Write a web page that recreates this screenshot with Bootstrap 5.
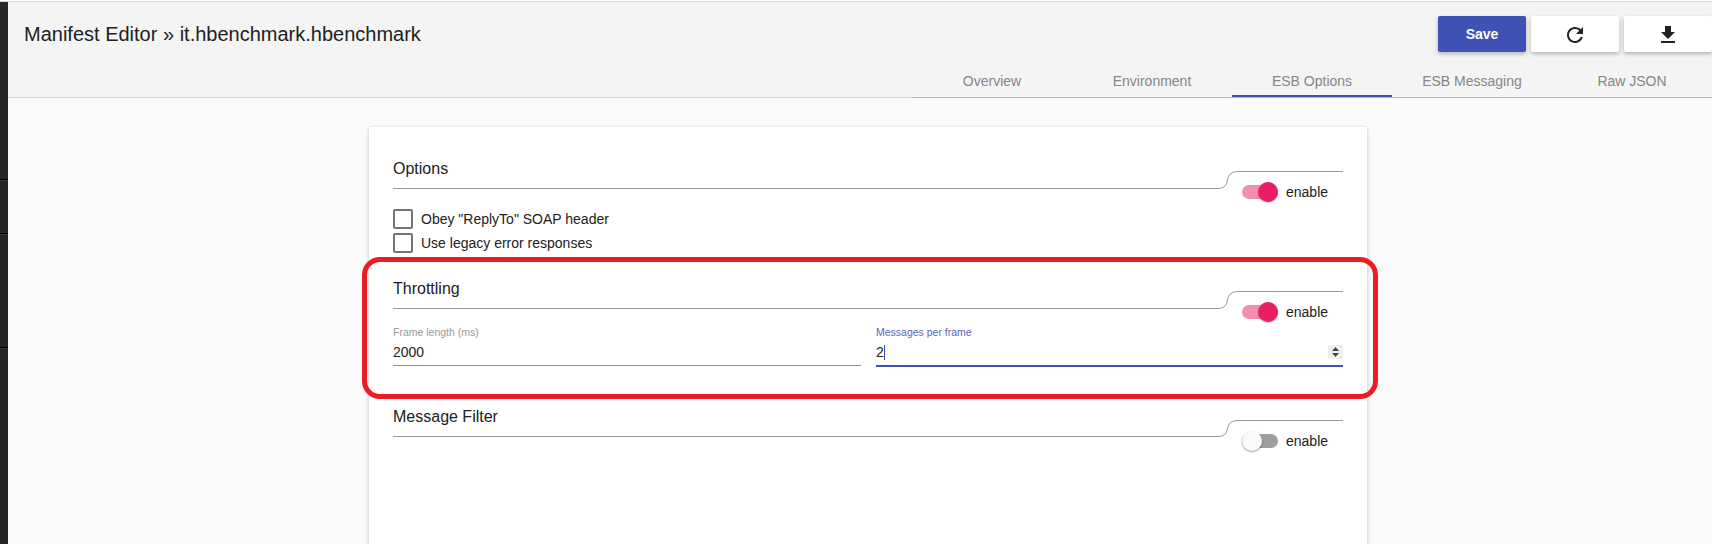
<!DOCTYPE html>
<html lang="en">
<head>
<meta charset="utf-8">
<title>Manifest Editor</title>
<link href="https://cdn.jsdelivr.net/npm/bootstrap@5.3.0/dist/css/bootstrap.min.css" rel="stylesheet">
<style>
  html, body { height: 544px; overflow: hidden; }
  body { font-family: "Liberation Sans", Arial, sans-serif; font-size: 14px; line-height: 20px; color: #212121; background: #fafafa; }
  .app { height: 544px; border-top: 1px solid #fff; }
  .app-top { border-top: 1px solid #d5d7d7; }
  .rail { width: 8px; background: #262728; padding-top: 177px; }
  .rail-line { height: 2px; border-top: 1px solid #000; border-bottom: 1px solid #3d3d31; }
  .rail-line + .rail-line { margin-top: 52px; }
  .rail-line + .rail-line.far { margin-top: 112px; }
  .topbar { height: 96px; background: #f4f4f4; border-bottom: 1px solid #d6d6d6; }
  .page-title { font-size: 20px; line-height: 24px; font-weight: 400; margin: 20px 0 0 16px; }
  .tool-row { gap: 5px; padding-top: 14px; }
  .md-btn { width: 88px; height: 36px; padding: 0; border: 0; border-radius: 2px; background: #fff; color: #212121; font-size: 14px; font-weight: 700; box-shadow: 0 2px 4px rgba(0,0,0,.27); }
  .md-btn svg { margin-top: 2px; }
  .md-btn.main, .md-btn.main:hover { background: #3f51b5; color: #fff; }
  .tab-row { width: 800px; height: 33px; margin-top: 13px; border-bottom: 1px solid #b8b8b8; }
  .tab-row .nav-link { width: 160px; height: 32px; padding: 7px 0 0; line-height: 18px; color: #868686; text-align: center; border-bottom: 2px solid transparent; }
  .tab-row .nav-link.active { border-bottom-color: #3f51b5; }
  .sheet { width: 998px; height: 430px; margin: 29px 0 0 361px; padding: 30px 24px 0; background: #fff; border-radius: 2px; box-shadow: 0 1px 4px rgba(0,0,0,.24); position: relative; }
  .sec-options { height: 120px; }
  .sec-throttling { height: 128px; }
  .sec-head { height: 52px; }
  .sec-title { font-size: 16px; line-height: 20px; font-weight: 400; margin: 0; height: 32px; border-bottom: 1px solid #9b9b9b; width: 825px; padding-top: 2px; }
  .sec-bend { width: 20px; height: 32px; }
  .sec-side { width: 105px; margin-top: 14px; border-top: 1px solid #9b9b9b; padding: 10px 0 0 4px; gap: 8px; }
  .md-toggle { width: 36px; height: 14px; border-radius: 7px; background: #f48fb1; margin: 3px 0; }
  .md-thumb { flex: none; width: 20px; height: 20px; margin-top: -3px; border-radius: 50%; background: #e91e63; box-shadow: 0 1px 2px rgba(0,0,0,.25); }
  .off .sec-side { margin-top: 15px; }
  .off .md-toggle { background: #9e9e9e; }
  .off .md-thumb { background: #fafafa; box-shadow: 0 1px 2px rgba(0,0,0,.4); }
  .md-check { height: 20px; gap: 8px; }
  .md-box { width: 20px; height: 20px; border: 2px solid #757575; border-radius: 2px; }
  .field-row { gap: 15px; margin-top: -5px; }
  .field { width: 468px; height: 42px; border-bottom: 1px solid #949494; }
  .field label { font-size: 10.5px; line-height: 12px; height: 15px; color: #999; display: block; padding-top: 2px; }
  .field-value { height: 24px; padding-top: 4px; line-height: 18px; }
  .field.focused { height: 43px; border-bottom: 2px solid #3f51b5; width: 467px; }
  .field.focused label { color: #5765be; }
  .caret-bar { width: 1px; height: 15px; margin-top: 2px; background: #3f51b5; }
  .spin { width: 15px; height: 14px; margin-top: 2px; background: #efefef; }
  .outline-box { position: absolute; left: -7px; top: 130px; width: 1016px; height: 142px; border: 5px solid #ed1c24; border-radius: 18px; pointer-events: none; }
</style>
</head>
<body>
<div class="app">
  <div class="app-top d-flex h-100">
    <aside class="rail flex-shrink-0">
      <div class="rail-line"></div><div class="rail-line"></div><div class="rail-line far"></div>
    </aside>
    <div class="flex-grow-1">
      <header class="topbar d-flex justify-content-between">
        <h1 class="page-title">Manifest Editor » it.hbenchmark.hbenchmark</h1>
        <div>
          <div class="tool-row d-flex justify-content-end">
            <button class="btn md-btn main">Save</button>
            <button class="btn md-btn d-flex align-items-center justify-content-center" aria-label="Reload"><svg width="24" height="24" viewBox="0 0 24 24" fill="#212121"><path d="M17.65 6.35C16.2 4.9 14.21 4 12 4c-4.42 0-7.99 3.58-7.99 8s3.57 8 7.99 8c3.73 0 6.84-2.55 7.73-6h-2.08c-.82 2.33-3.04 4-5.65 4-3.31 0-6-2.69-6-6s2.69-6 6-6c1.66 0 3.14.69 4.22 1.78L13 11h7V4z"/></svg></button>
            <button class="btn md-btn d-flex align-items-center justify-content-center" aria-label="Download"><svg width="24" height="24" viewBox="0 0 24 24" fill="#212121"><path d="M19 9h-4V3H9v6H5l7 7 7-7zM5 18v2h14v-2z"/></svg></button>
          </div>
          <nav class="tab-row nav flex-nowrap">
            <a class="nav-link">Overview</a><a class="nav-link">Environment</a><a class="nav-link active">ESB Options</a><a class="nav-link">ESB Messaging</a><a class="nav-link">Raw JSON</a>
          </nav>
        </div>
      </header>
      <main class="sheet">
        <section class="sec-options">
          <div class="sec-head d-flex">
            <h2 class="sec-title">Options</h2>
            <svg class="sec-bend" viewBox="0 0 20 32" fill="none" stroke="#9b9b9b"><path d="M0 31.5Q8.500 31.500 9.500 23Q10.500 14.500 20 14.500"/></svg>
            <div class="sec-side d-flex"><div class="md-toggle d-flex justify-content-end"><span class="md-thumb"></span></div><span>enable</span></div>
          </div>
          <div class="md-check d-flex mb-1"><span class="md-box"></span><span>Obey "ReplyTo" SOAP header</span></div>
          <div class="md-check d-flex"><span class="md-box"></span><span>Use legacy error responses</span></div>
        </section>
        <section class="sec-throttling">
          <div class="sec-head d-flex">
            <h2 class="sec-title">Throttling</h2>
            <svg class="sec-bend" viewBox="0 0 20 32" fill="none" stroke="#9b9b9b"><path d="M0 31.5Q8.500 31.500 9.500 23Q10.500 14.500 20 14.500"/></svg>
            <div class="sec-side d-flex"><div class="md-toggle d-flex justify-content-end"><span class="md-thumb"></span></div><span>enable</span></div>
          </div>
          <div class="field-row d-flex">
            <div class="field"><label>Frame length (ms)</label><div class="field-value">2000</div></div>
            <div class="field focused"><label>Messages per frame</label>
              <div class="field-value d-flex"><span>2</span><span class="caret-bar"></span>
                <svg class="spin ms-auto" viewBox="0 0 15 14"><path d="M4 6l3.500-4L11 6zM4 8l3.500 4L11 8z" fill="#444"/></svg></div></div>
          </div>
        </section>
        <section class="off">
          <div class="sec-head d-flex">
            <h2 class="sec-title">Message Filter</h2>
            <svg class="sec-bend" viewBox="0 0 20 32" fill="none" stroke="#9b9b9b"><path d="M0 31.5Q8.500 31.500 9.500 23.500Q10.500 15.500 20 15.500"/></svg>
            <div class="sec-side d-flex"><div class="md-toggle d-flex"><span class="md-thumb"></span></div><span>enable</span></div>
          </div>
        </section>
        <div class="outline-box"></div>
      </main>
    </div>
  </div>
</div>
<script src="https://cdn.jsdelivr.net/npm/bootstrap@5.3.0/dist/js/bootstrap.bundle.min.js"></script>
</body>
</html>
